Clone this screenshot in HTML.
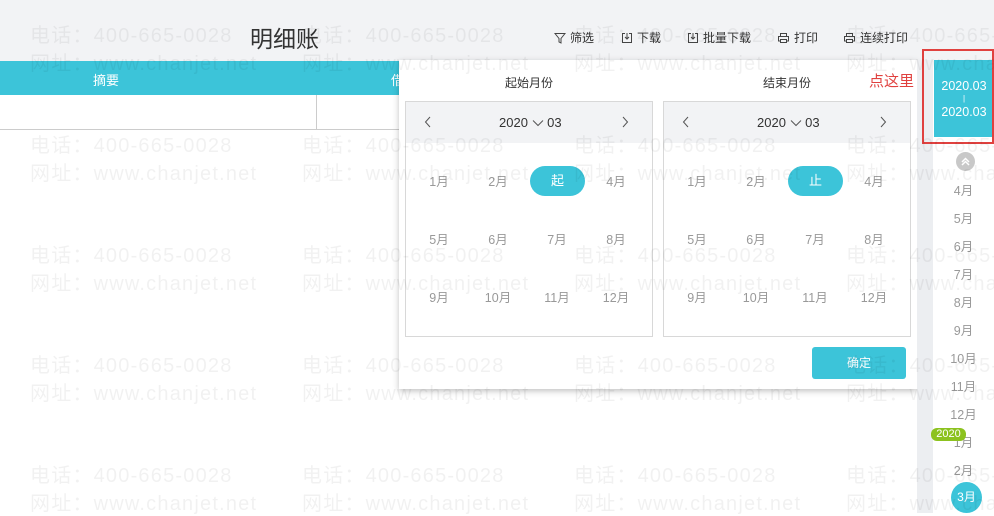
<!DOCTYPE html>
<html><head><meta charset="utf-8"><style>
*{margin:0;padding:0;box-sizing:border-box}
body{width:994px;height:513px;overflow:hidden;position:relative;background:#fff;font-family:"Liberation Sans","Noto Sans CJK SC",sans-serif;color:#333}
.abs{position:absolute}
.top{left:0;top:0;width:994px;height:61px;background:#f2f3f5}
.title{left:250px;top:20px;font-size:23px;color:#333}
.tool{top:29px;font-size:12px;color:#333;display:flex;align-items:center;gap:4px}
.hdr{left:0;top:61px;width:917px;height:34px;background:#3cc4d9;color:#fff;font-size:13px}
.row{left:0;top:95px;width:917px;height:35px;border-bottom:1px solid #ccc;background:#fff}
.pop{left:399px;top:60px;width:518px;height:329px;background:#fff;box-shadow:0 2px 6px rgba(0,0,0,.25)}
.pan{top:41px;width:248px;height:236px;border:1px solid #d8d8d8;background:#fff}
.ph{left:0;top:0;width:100%;height:41px;background:#f2f3f5;font-size:13px}
.m{font-size:12.5px;color:#999;width:50px;text-align:center;margin-left:-25px;margin-top:-3px}
.pill{width:55px;height:30px;border-radius:15px;background:#3cc4d9;color:#fff;font-size:13px;text-align:center;line-height:30px}
.side{left:917px;top:60px;width:16px;height:453px;background:#eceef1}
.col{left:933px;top:60px;width:61px;height:453px;background:#fff}
.sm{left:933px;width:61px;text-align:center;font-size:12.5px;color:#999;margin-top:-3px}
.wm{position:absolute;font-size:20px;color:rgba(0,0,0,.055);white-space:nowrap;letter-spacing:1.2px;pointer-events:none}
</style></head><body>
<div class="abs top"></div>
<div class="abs title">明细账</div>
<div class="abs tool" style="left:554px"><svg width="12" height="12" viewBox="0 0 12 12"><path d="M1 1.5h10L7 6.5V11L5 10V6.5z" fill="none" stroke="#444" stroke-width="1"/></svg>筛选</div>
<div class="abs tool" style="left:621px"><svg width="12" height="12" viewBox="0 0 12 12"><path d="M4 1.5H1.5v9h9v-9H8M6 1v6M4 5l2 2 2-2" fill="none" stroke="#444"/></svg>下载</div>
<div class="abs tool" style="left:687px"><svg width="12" height="12" viewBox="0 0 12 12"><path d="M4 1.5H1.5v9h9v-9H8M6 1v6M4 5l2 2 2-2" fill="none" stroke="#444"/></svg>批量下载</div>
<div class="abs tool" style="left:777px"><svg width="13" height="12" viewBox="0 0 13 12"><path d="M3.5 4V1.5h6V4M3 9H1.5V4.5h10V9H10M3.5 7.5h6v3h-6z" fill="none" stroke="#444"/></svg>打印</div>
<div class="abs tool" style="left:843px"><svg width="13" height="12" viewBox="0 0 13 12"><path d="M3.5 4V1.5h6V4M3 9H1.5V4.5h10V9H10M3.5 7.5h6v3h-6z" fill="none" stroke="#444"/></svg>连续打印</div>

<div class="abs hdr"><span class="abs" style="left:93px;top:9px">摘要</span><span class="abs" style="left:391px;top:9px">借</span></div>
<div class="abs row"><div class="abs" style="left:316px;top:0;width:1px;height:35px;background:#ccc"></div></div>

<div class="abs pop">
  <div class="abs" style="left:106px;top:14px;font-size:12px">起始月份</div>
  <div class="abs" style="left:364px;top:14px;font-size:12px">结束月份</div>
  <div class="abs pan" style="left:6px">
    <div class="abs ph"><svg class="abs" style="left:18px;top:14px" width="8" height="12" viewBox="0 0 8 12"><path d="M6 1L1.5 6 6 11" fill="none" stroke="#555"/></svg><span class="abs" style="left:93px;top:13px">2020 <svg width="12" height="8" viewBox="0 0 12 8"><path d="M1 1.5l5 5 5-5" fill="none" stroke="#555"/></svg> 03</span><svg class="abs" style="left:215px;top:14px" width="8" height="12" viewBox="0 0 8 12"><path d="M2 1l4.5 5L2 11" fill="none" stroke="#555"/></svg></div>
  </div>
  <div class="abs pan" style="left:264px">
    <div class="abs ph"><svg class="abs" style="left:18px;top:14px" width="8" height="12" viewBox="0 0 8 12"><path d="M6 1L1.5 6 6 11" fill="none" stroke="#555"/></svg><span class="abs" style="left:93px;top:13px">2020 <svg width="12" height="8" viewBox="0 0 12 8"><path d="M1 1.5l5 5 5-5" fill="none" stroke="#555"/></svg> 03</span><svg class="abs" style="left:215px;top:14px" width="8" height="12" viewBox="0 0 8 12"><path d="M2 1l4.5 5L2 11" fill="none" stroke="#555"/></svg></div>
  </div>
  <div class="abs" style="left:413px;top:287px;width:94px;height:32px;background:#3cc4d9;border-radius:3px;color:#fff;font-size:12px;text-align:center;line-height:32px">确定</div>
</div>
<div class="abs m" style="left:439px;top:174px">1月</div><div class="abs m" style="left:498px;top:174px">2月</div><div class="abs pill" style="left:530px;top:166px">起</div><div class="abs m" style="left:616px;top:174px">4月</div>
<div class="abs m" style="left:439px;top:232px">5月</div><div class="abs m" style="left:498px;top:232px">6月</div><div class="abs m" style="left:557px;top:232px">7月</div><div class="abs m" style="left:616px;top:232px">8月</div>
<div class="abs m" style="left:439px;top:290px">9月</div><div class="abs m" style="left:498px;top:290px">10月</div><div class="abs m" style="left:557px;top:290px">11月</div><div class="abs m" style="left:616px;top:290px">12月</div>
<div class="abs m" style="left:697px;top:174px">1月</div><div class="abs m" style="left:756px;top:174px">2月</div><div class="abs pill" style="left:788px;top:166px">止</div><div class="abs m" style="left:874px;top:174px">4月</div>
<div class="abs m" style="left:697px;top:232px">5月</div><div class="abs m" style="left:756px;top:232px">6月</div><div class="abs m" style="left:815px;top:232px">7月</div><div class="abs m" style="left:874px;top:232px">8月</div>
<div class="abs m" style="left:697px;top:290px">9月</div><div class="abs m" style="left:756px;top:290px">10月</div><div class="abs m" style="left:815px;top:290px">11月</div><div class="abs m" style="left:874px;top:290px">12月</div>

<div class="abs" style="left:869px;top:70px;font-size:15px;color:#e0413f">点这里</div>
<div class="abs" style="left:917px;top:68px;font-size:14px;color:#999">›</div>

<div class="abs side"></div>
<div class="abs col"></div>
<div class="abs" style="left:934px;top:60px;width:60px;height:77px;background:#3cc4d9;color:#fff;font-size:12.5px;text-align:center;padding-top:17px;line-height:18px">2020.03<br><span style="font-size:8px;line-height:8px;display:block">|</span>2020.03</div>
<div class="abs" style="left:922px;top:49px;width:72px;height:95px;border:2px solid #e0413f"></div>
<div class="abs" style="left:956px;top:152px;width:19px;height:19px;border-radius:50%;background:#c8c8c8"><svg width="19" height="19" viewBox="0 0 19 19"><path d="M6 10l3.5-3.5L13 10M6 13l3.5-3.5L13 13" fill="none" stroke="#fff" stroke-width="1.5"/></svg></div>
<div class="abs sm" style="top:183px">4月</div>
<div class="abs sm" style="top:211px">5月</div>
<div class="abs sm" style="top:239px">6月</div>
<div class="abs sm" style="top:267px">7月</div>
<div class="abs sm" style="top:295px">8月</div>
<div class="abs sm" style="top:323px">9月</div>
<div class="abs sm" style="top:351px">10月</div>
<div class="abs sm" style="top:379px">11月</div>
<div class="abs sm" style="top:407px">12月</div>
<div class="abs sm" style="top:435px">1月</div>
<div class="abs sm" style="top:463px">2月</div>
<div class="abs" style="left:931px;top:428px;width:35px;height:13px;border-radius:6px;background:#8cc21f;color:#fff;font-size:11px;line-height:13px;text-align:center">2020</div>
<div class="abs" style="left:951px;top:482px;width:31px;height:31px;border-radius:50%;background:#3cc4d9;color:#fff;font-size:12px;text-align:center;line-height:31px">3月</div>

<div id="wm"></div>
<script>
var h='';var xs=[30,302,574,846];var ys=[19,129,239,349,459];
for(var i=0;i<ys.length;i++)for(var j=0;j<xs.length;j++){
h+='<div class="wm" style="left:'+xs[j]+'px;top:'+ys[i]+'px">电话：400-665-0028</div>';
h+='<div class="wm" style="left:'+xs[j]+'px;top:'+(ys[i]+28)+'px">网址：www.chanjet.net</div>';}
document.getElementById('wm').innerHTML=h;
</script>
</body></html>
